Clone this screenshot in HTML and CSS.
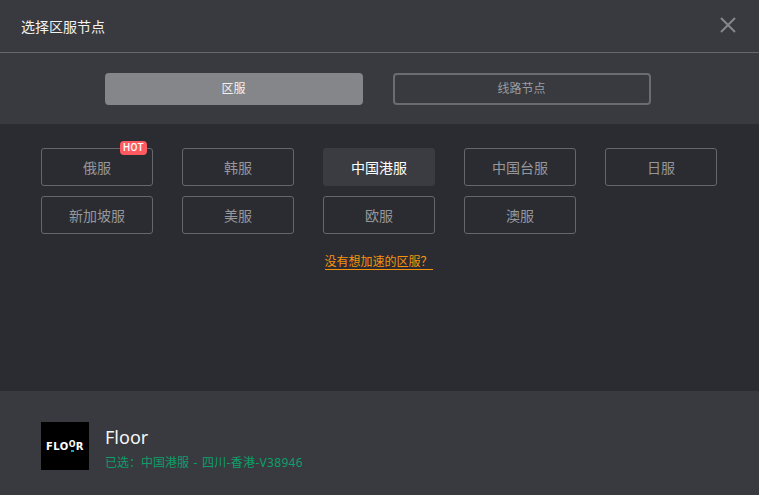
FILE: index.html
```html
<!DOCTYPE html>
<html lang="zh">
<head>
<meta charset="utf-8">
<title>选择区服节点</title>
<link rel="stylesheet" href="styles.css">
</head>
<body>
<div class="dialog">
  <header class="header">
    <h1 class="title">选择区服节点</h1>
    <svg class="close" width="16" height="16" viewBox="0 0 16 16"><path d="M1 1 15 15M15 1 1 15" stroke="#85878b" stroke-width="2" fill="none"/></svg>
  </header>
  <nav class="tabs">
    <div class="tab tab-active">区服</div>
    <div class="tab">线路节点</div>
  </nav>
  <main class="body">
    <div class="grid">
      <div class="region">俄服<span class="hot">HOT</span></div>
      <div class="region">韩服</div>
      <div class="region region-active">中国港服</div>
      <div class="region">中国台服</div>
      <div class="region">日服</div>
      <div class="region">新加坡服</div>
      <div class="region">美服</div>
      <div class="region">欧服</div>
      <div class="region">澳服</div>
    </div>
    <a class="missing" href="#">没有想加速的区服？</a>
  </main>
  <footer class="footer">
    <div class="logo"><span class="logo-text">FLO<span class="logo-o">O</span>R</span></div>
    <div class="info">
      <div class="game">Floor</div>
      <div class="selected">已选：中国港服<span class="node"> - 四川-香港-V38946</span></div>
    </div>
  </footer>
</div>
</body>
</html>
```
FILE: styles.css
```css
* { box-sizing: border-box; }
html, body { margin: 0; padding: 0; }
body {
  width: 759px;
  height: 495px;
  overflow: hidden;
  font-family: "Noto Sans CJK SC", "Noto Sans", sans-serif;
  background: #2b2c31;
}
.dialog { display: flex; flex-direction: column; height: 495px; }
.header {
  height: 53px;
  flex: none;
  display: flex;
  align-items: center;
  justify-content: space-between;
  padding: 0 23px 0 21px;
  background: #393a3f;
  border-bottom: 1px solid #66676a;
}
.title { margin: 0; font-size: 14px; font-weight: 400; color: #f2f2f2; line-height: 20px; }
.close { display: block; margin-top: -2px; }
.tabs {
  height: 71px;
  flex: none;
  display: flex;
  justify-content: center;
  gap: 30px;
  padding: 20px 4px 0 0;
  background: #393a3f;
}
.tab {
  width: 258px;
  height: 32px;
  border-radius: 4px;
  border: 2px solid #6b6c70;
  display: flex;
  align-items: center;
  justify-content: center;
  font-size: 12px;
  line-height: 16px;
  padding-bottom: 2px;
  color: #9b9c9f;
}
.tab-active { background: #85868a; border-color: #85868a; color: #f2f2f2; }
.body {
  flex: 1;
  padding: 24px 42px 0 41px;
  background: #2b2c31;
  display: flex;
  flex-direction: column;
}
.grid {
  display: grid;
  grid-template-columns: repeat(5, 112px);
  grid-auto-rows: 38px;
  column-gap: 29px;
  row-gap: 10px;
}
.region {
  position: relative;
  border: 1px solid #66676a;
  border-radius: 3px;
  display: flex;
  align-items: center;
  justify-content: center;
  font-size: 14px;
  color: #96979b;
}
.region-active { background: #3b3c41; border-color: #3b3c41; color: #fff; }
.hot {
  position: absolute;
  top: -8px;
  right: 5px;
  width: 27px;
  height: 14px;
  border-radius: 4px;
  background: #ff5a5f;
  color: #fff;
  font-family: "Roboto", sans-serif;
  font-size: 10px;
  font-weight: 500;
  letter-spacing: 0.4px;
  line-height: 14px;
  text-align: center;
}
.missing {
  align-self: center;
  margin-top: 17px;
  margin-left: -1px;
  width: 108px;
  font-size: 12px;
  line-height: 20px;
  height: 19px;
  color: #f5930f;
  text-decoration: none;
  border-bottom: 1px solid #f5930f;
  white-space: nowrap;
}
.footer {
  height: 104px;
  flex: none;
  background: #393a3f;
  display: flex;
  align-items: flex-start;
  padding: 31px 0 0 41px;
  gap: 16px;
}
.logo {
  width: 48px;
  height: 48px;
  background: #000;
  display: flex;
  align-items: center;
  justify-content: center;
}
.logo-text {
  font-family: "DejaVu Sans", sans-serif;
  font-size: 10px;
  font-weight: 700;
  letter-spacing: 0.4px;
  color: #fff;
  line-height: 12px;
  padding-top: 3px;
}
.logo-o { position: relative; top: -3px; font-size: 8px; }
.logo-o::after {
  content: "";
  position: absolute;
  left: 2px;
  top: 10px;
  width: 3px;
  height: 2px;
  background: #19a7b5;
}
.info { padding-top: 2px; }
.game { font-size: 18px; line-height: 26px; color: #f5f5f5; font-family: "Noto Sans", sans-serif; }
.selected {
  font-family: "Noto Sans", "Noto Sans CJK SC", sans-serif;
  font-size: 12px;
  line-height: 20px;
  margin-top: 3px;
  color: #0c9f69;
  white-space: nowrap;
}
.node { letter-spacing: 0.3px; word-spacing: 1px; }
```
